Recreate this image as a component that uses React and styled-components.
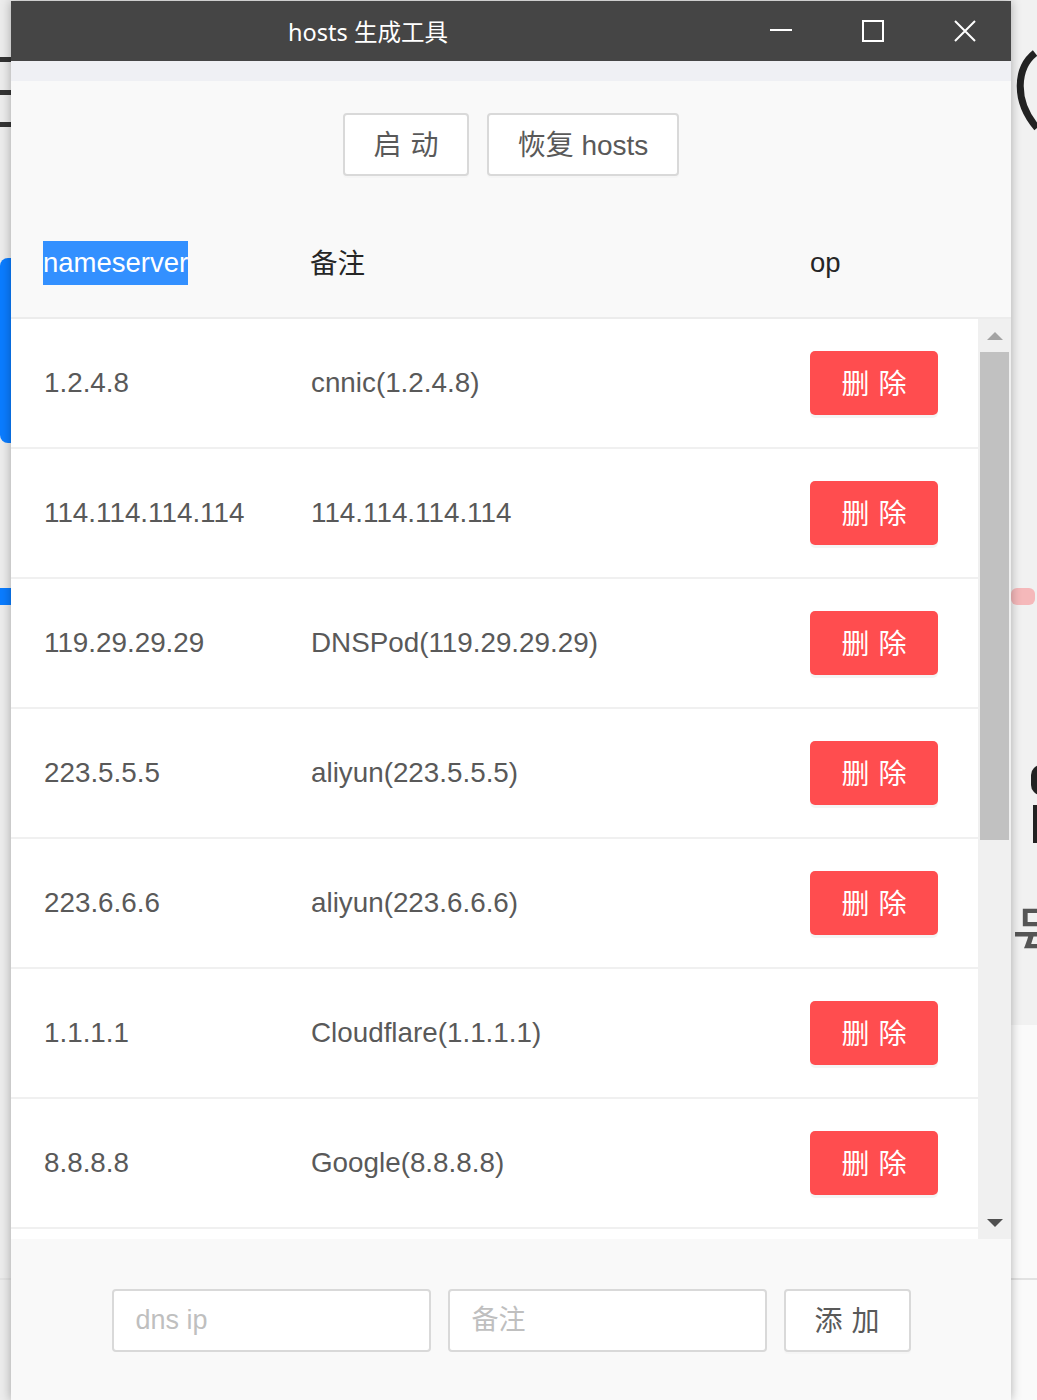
import React from "react";
import styled, { createGlobalStyle } from "styled-components";

const GlobalStyle = createGlobalStyle`
  html, body {
    margin: 0;
    padding: 0;
  }
  body {
    background: #efefef;
    font-family: "Liberation Sans", "Noto Sans CJK SC", sans-serif;
  }
`;

const servers = [
  { ip: "1.2.4.8", note: "cnnic(1.2.4.8)" },
  { ip: "114.114.114.114", note: "114.114.114.114" },
  { ip: "119.29.29.29", note: "DNSPod(119.29.29.29)" },
  { ip: "223.5.5.5", note: "aliyun(223.5.5.5)" },
  { ip: "223.6.6.6", note: "aliyun(223.6.6.6)" },
  { ip: "1.1.1.1", note: "Cloudflare(1.1.1.1)" },
  { ip: "8.8.8.8", note: "Google(8.8.8.8)" },
  { ip: "8.8.4.4", note: "Google(8.8.4.4)" },
  { ip: "9.9.9.9", note: "Quad9(9.9.9.9)" },
  { ip: "180.76.76.76", note: "baidu(180.76.76.76)" },
  { ip: "101.226.4.6", note: "360(101.226.4.6)" },
  { ip: "208.67.222.222", note: "OpenDNS(208.67.222.222)" }
];

// desktop behind the window
const Desktop = styled.div`
  display: grid;
  grid-template-columns: 11px 1000px 1fr;
  height: 1400px;
  overflow: hidden;
`;

const Side = styled.div`
  position: relative;
  background: ${p => (p.$right ? "#f1f1f1" : "#ececec")};
`;

const Mark = styled.div`
  position: absolute;
  left: ${p => p.$left || 0}px;
  width: ${p => p.$width || 40}px;
  top: ${p => p.$top}px;
  height: ${p => p.$height}px;
  background: ${p => p.$color};
  border-radius: ${p => p.$radius || 0}px;
`;

const Arc = styled.svg`
  position: absolute;
  left: 0;
  top: 45px;
`;

const Glyph = styled.div`
  position: absolute;
  left: 0;
  top: 900px;
  font-size: 64px;
  line-height: 1;
  color: #555;
  font-family: "Noto Sans CJK SC", sans-serif;
`;

// window
const Window = styled.div`
  position: relative;
  z-index: 1;
  margin-top: 1px;
  height: 1399px;
  display: flex;
  flex-direction: column;
  background: #f9f9f9;
  box-shadow: 0 0 10px rgba(0, 0, 0, 0.3);
  overflow: hidden;
`;

const TitleBar = styled.div`
  display: flex;
  height: 60px;
  flex-shrink: 0;
  background: #454545;
`;

const Title = styled.div`
  flex: 1;
  padding-right: 10px;
  text-align: center;
  line-height: 62px;
  color: #fff;
  font-size: 23.5px;
  font-family: "Noto Sans", "Noto Sans CJK SC", sans-serif;
`;

const Controls = styled.div`
  display: flex;
`;

const WinButton = styled.div`
  width: 92px;
  height: 60px;
  display: flex;
  align-items: center;
  justify-content: center;
`;

const Strip = styled.div`
  height: 20px;
  flex-shrink: 0;
  background: #eff0f4;
`;

const Toolbar = styled.div`
  display: flex;
  justify-content: center;
  gap: 18px;
  padding: 32px 0 33px;
`;

const Button = styled.button`
  box-sizing: border-box;
  width: ${p => p.$width}px;
  height: 63px;
  padding: 0 0 4px;
  border: 2px solid #d9d9d9;
  border-radius: 4px;
  background: #fff;
  color: #595959;
  font-family: "Liberation Sans", "Noto Sans CJK SC", sans-serif;
  font-size: 28px;
  white-space: nowrap;
  box-shadow: 0 2px 0 rgba(0, 0, 0, 0.015);
  cursor: pointer;
`;

// two-character CJK labels get a gap between the characters
const Label = styled.span`
  letter-spacing: ${p => (p.$spaced ? "9px" : "0")};
  margin-right: ${p => (p.$spaced ? "-9px" : "0")};
`;

const Header = styled.div`
  display: grid;
  grid-template-columns: 267px 500px 1fr;
  align-items: center;
  height: 108px;
  flex-shrink: 0;
  padding-left: 32px;
  border-bottom: 2px solid #ececec;
  color: #262626;
  font-size: 27.5px;
`;

const HeaderCell = styled.span`
  margin-top: ${p => (p.$cjk ? "-4px" : "0")};
`;

const Selected = styled.span`
  justify-self: start;
  background: #3390ff;
  color: #fff;
  line-height: 44px;
`;

const Body = styled.div`
  display: flex;
  height: 920px;
  flex-shrink: 0;
  background: #fff;
`;

const Viewport = styled.div`
  flex: 1;
  overflow: hidden;
`;

const Row = styled.div`
  display: grid;
  grid-template-columns: 267px 500px 1fr;
  align-items: center;
  height: 128px;
  padding-left: 33px;
  border-bottom: 2px solid #f0f0f0;
  color: #595959;
  font-size: 27.8px;
`;

const DeleteButton = styled.button`
  width: 128px;
  height: 64px;
  margin-left: -1px;
  padding: 0 0 2px;
  border: none;
  border-radius: 5px;
  background: #ff4d4f;
  color: #fff;
  font-family: "Liberation Sans", "Noto Sans CJK SC", sans-serif;
  font-size: 28px;
  white-space: nowrap;
  box-shadow: 0 3px 0 rgba(0, 0, 0, 0.045);
  cursor: pointer;
`;

const Scrollbar = styled.div`
  width: 33px;
  display: flex;
  flex-direction: column;
  background: #f0f0f0;
`;

const Arrow = styled.div`
  height: 33px;
  display: flex;
  align-items: center;
  justify-content: center;
`;

const Thumb = styled.div`
  height: 488px;
  margin: 0 2px;
  background: #c1c1c1;
`;

const Track = styled.div`
  flex: 1;
`;

const Footer = styled.div`
  display: flex;
  justify-content: center;
  gap: 17px;
  padding-top: 50px;
`;

const Input = styled.input`
  box-sizing: border-box;
  width: 319px;
  height: 63px;
  padding: 0 22px;
  border: 2px solid #d9d9d9;
  border-radius: 4px;
  background: #fff;
  color: #595959;
  font-family: "Liberation Sans", "Noto Sans CJK SC", sans-serif;
  font-size: 27px;
  outline: none;
  &::placeholder {
    color: #bfbfbf;
  }
`;

const Triangle = ({ up, color }) => (
  <svg width="16" height="8" viewBox="0 0 16 8">
    <path d={up ? "M0 8 L8 0 L16 8 Z" : "M0 0 L16 0 L8 8 Z"} fill={color} />
  </svg>
);

const App = () => (
  <Desktop>
    <GlobalStyle />
    <Side>
      <Mark $top={57} $height={5} $color="#333" />
      <Mark $top={90} $height={5} $color="#333" />
      <Mark $top={122} $height={5} $color="#333" />
      <Mark $top={258} $height={185} $color="#0a7cff" $radius={8} />
      <Mark $top={588} $height={17} $color="#0a7cff" />
      <Mark $top={1278} $height={2} $color="#e2e2e2" />
    </Side>

    <Window>
      <TitleBar>
        <Title>hosts 生成工具</Title>
        <Controls>
          <WinButton>
            <svg width="24" height="24" viewBox="0 0 24 24">
              <path d="M1 11 H23" stroke="#fff" strokeWidth="2" />
            </svg>
          </WinButton>
          <WinButton>
            <svg width="24" height="24" viewBox="0 0 24 24">
              <rect x="2" y="2" width="20" height="20" fill="none" stroke="#fff" strokeWidth="2" />
            </svg>
          </WinButton>
          <WinButton>
            <svg width="24" height="24" viewBox="0 0 24 24">
              <path d="M2 2 L22 22 M22 2 L2 22" stroke="#fff" strokeWidth="2" />
            </svg>
          </WinButton>
        </Controls>
      </TitleBar>
      <Strip />

      <Toolbar>
        <Button $width={126}>
          <Label $spaced>启动</Label>
        </Button>
        <Button $width={192}>
          <Label>恢复 hosts</Label>
        </Button>
      </Toolbar>

      <Header>
        <Selected>nameserver</Selected>
        <HeaderCell $cjk>备注</HeaderCell>
        <HeaderCell>op</HeaderCell>
      </Header>

      <Body>
        <Viewport>
          {servers.map(s => (
            <Row key={s.ip}>
              <span>{s.ip}</span>
              <span>{s.note}</span>
              <div>
                <DeleteButton>
                  <Label $spaced>删除</Label>
                </DeleteButton>
              </div>
            </Row>
          ))}
        </Viewport>
        <Scrollbar>
          <Arrow>
            <Triangle up color="#a3a3a3" />
          </Arrow>
          <Thumb />
          <Track />
          <Arrow>
            <Triangle color="#505050" />
          </Arrow>
        </Scrollbar>
      </Body>

      <Footer>
        <Input placeholder="dns ip" />
        <Input placeholder="备注" />
        <Button $width={127}>
          <Label $spaced>添加</Label>
        </Button>
      </Footer>
    </Window>

    <Side $right>
      <Arc width="26" height="90" viewBox="0 0 26 90">
        <path d="M24 8 C6 22 2 55 26 83" fill="none" stroke="#222" strokeWidth="7" />
      </Arc>
      <Mark $top={588} $height={17} $width={24} $color="#f5b8ba" $radius={6} />
      <Mark $top={765} $height={30} $left={20} $width={20} $color="#222" $radius={10} />
      <Mark $top={805} $height={38} $left={22} $width={20} $color="#222" />
      <Glyph>号</Glyph>
      <Mark $top={1025} $height={375} $width={40} $color="#fafafa" />
      <Mark $top={1278} $height={2} $width={40} $color="#e2e2e2" />
    </Side>
  </Desktop>
);

export default App;
